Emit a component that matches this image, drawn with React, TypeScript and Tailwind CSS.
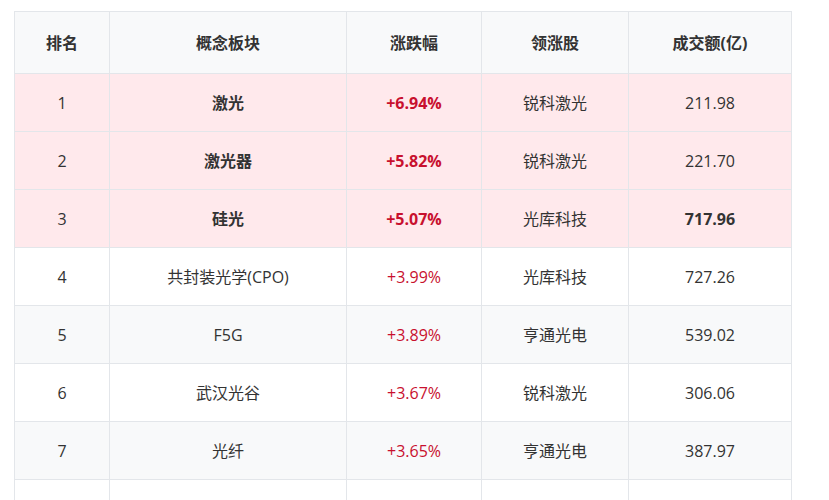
import React from "react"

interface Row {
    rank: number | ""
    name: string
    change: string
    leader: string
    amount: string
    hot?: boolean
    boldAmount?: boolean
}

const rows: Row[] = [
    { rank: 1, name: "激光", change: "+6.94%", leader: "锐科激光", amount: "211.98", hot: true },
    { rank: 2, name: "激光器", change: "+5.82%", leader: "锐科激光", amount: "221.70", hot: true },
    { rank: 3, name: "硅光", change: "+5.07%", leader: "光库科技", amount: "717.96", hot: true, boldAmount: true },
    { rank: 4, name: "共封装光学(CPO)", change: "+3.99%", leader: "光库科技", amount: "727.26" },
    { rank: 5, name: "F5G", change: "+3.89%", leader: "亨通光电", amount: "539.02" },
    { rank: 6, name: "武汉光谷", change: "+3.67%", leader: "锐科激光", amount: "306.06" },
    { rank: 7, name: "光纤", change: "+3.65%", leader: "亨通光电", amount: "387.97" },
    // next row only peeks in at the bottom of the frame
    { rank: "", name: "", change: "", leader: "", amount: "" },
]

const headers = ["排名", "概念板块", "涨跌幅", "领涨股", "成交额(亿)"]
const widths = ["w-[95px]", "w-[237px]", "w-[135px]", "w-[147px]", "w-[163px]"]

export default function App() {
    return (
        <div
            className="bg-white pt-[11px] pl-[14px] min-h-[500px] text-[#333333]"
            style={{ fontFamily: '"Open Sans", "Noto Sans CJK SC", sans-serif' }}
        >
            <table className="w-[777px] border-collapse table-fixed text-[16px]">
                <thead>
                    <tr className="bg-[#f8f9fa]">
                        {headers.map((h, i) => (
                            <th
                                key={h}
                                className={`${widths[i]} h-[62px] border border-[#e3e6ea] text-center font-bold text-[16px] text-[#333333]`}
                            >
                                {h}
                            </th>
                        ))}
                    </tr>
                </thead>
                <tbody>
                    {rows.map((r, idx) => {
                        // pink for the top three, zebra stripes after that
                        const bg = r.hot ? "bg-[#ffe9ec]" : idx % 2 === 0 ? "bg-[#f8f9fa]" : "bg-white"
                        return (
                            <tr key={idx} className={bg}>
                                <td className="h-[58px] border border-[#e3e6ea] text-center">{r.rank}</td>
                                <td className={`border border-[#e3e6ea] text-center ${r.hot ? "font-bold" : ""}`}>
                                    {r.name}
                                </td>
                                <td className={`border border-[#e3e6ea] text-center text-[#c8102e] ${r.hot ? "font-bold" : "font-medium"}`}>
                                    {r.change}
                                </td>
                                <td className="border border-[#e3e6ea] text-center">{r.leader}</td>
                                <td className={`border border-[#e3e6ea] text-center ${r.boldAmount ? "font-bold" : ""}`}>
                                    {r.amount}
                                </td>
                            </tr>
                        )
                    })}
                </tbody>
            </table>
        </div>
    )
}
